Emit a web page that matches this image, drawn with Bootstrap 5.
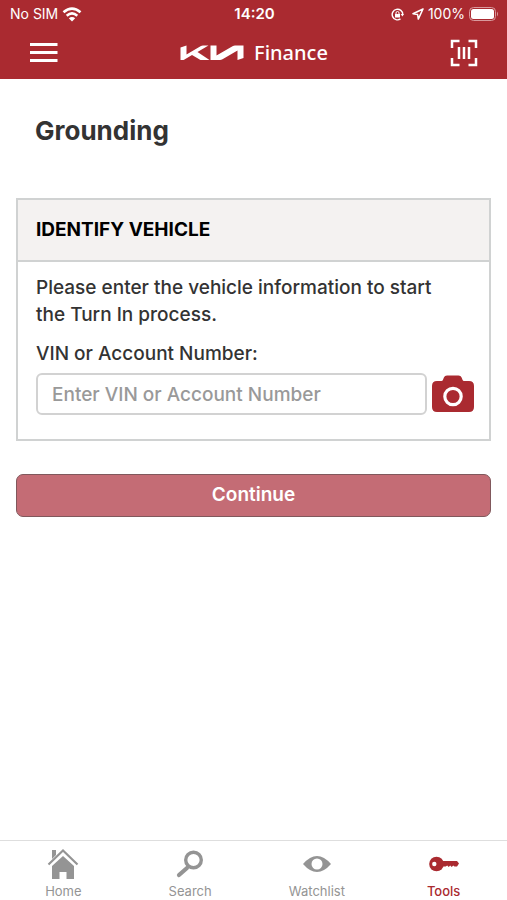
<!DOCTYPE html>
<html lang="en">
<head>
<meta charset="utf-8">
<meta name="viewport" content="width=device-width, initial-scale=1">
<title>Kia Finance - Grounding</title>
<link href="https://cdn.jsdelivr.net/npm/bootstrap@5.3.0/dist/css/bootstrap.min.css" rel="stylesheet">
<style>
  :root { --kia-red: #aa2a30; --ink: #333; --line: #d0d2d2; }
  body { font-family: Inter, "Open Sans", sans-serif; color: var(--ink); font-weight: 500; }
  svg { display: block; flex: none; }
  .app-header { background: var(--kia-red); }
  .status-bar { height: 28px; font-size: 14px; font-weight: 400; line-height: 20px; padding: 0 8px 0 10px; }
  .status-time { font-size: 15px; font-weight: 600; }
  .app-nav { height: 51px; padding: 0 28px 2px; }
  .brand { font: 600 20px/28px "Noto Sans", "Open Sans", sans-serif; color: #fff; text-decoration: none; gap: 10px; }
  .brand span { font-weight: 500; }
  .icon-btn { border: 0; background: none; padding: 0; color: inherit; }
  .page-title { font-size: 26px; line-height: 32px; font-weight: 700; padding: 36px 35px 51px; margin: 0; }
  .vehicle-card { border: 2px solid var(--line); border-radius: 0; color: var(--ink); }
  .vehicle-card .card-header { background: #f4f2f1; border-bottom: 2px solid var(--line); border-radius: 0; padding: 16px 18px; }
  .vehicle-card h2 { font-size: 19px; line-height: 28px; font-weight: 700; color: #000; margin: 0; }
  .vehicle-card .card-body { padding: 12px 14px 24px 18px; font-size: 19px; line-height: 27px; }
  .vin-label { margin-bottom: 6px; }
  .vin-input { height: 42px; border: 2px solid #d2d2d2; border-radius: 6px; padding: 0 14px; font-size: 19px; font-weight: 500; }
  .vin-input::placeholder { color: #999; opacity: 1; }
  .continue-btn { height: 43px; padding: 0; margin-top: 33px; font-size: 19px; font-weight: 600; border-radius: 7px;
    --bs-btn-color: #fff; --bs-btn-bg: #c46c75; --bs-btn-border-color: #80585c;
    --bs-btn-hover-color: #fff; --bs-btn-hover-bg: #b95c66; --bs-btn-hover-border-color: #80585c; }
  .tab-bar { border-top: 1px solid #dedede; height: 60px; }
  .tab-bar .nav-link { color: #949494; padding: 5px 0 0; font-size: 13px; line-height: 18px; font-weight: 400; }
  .tab-bar .nav-link.active { color: var(--kia-red); font-weight: 500; }
  .tab-icon { height: 36px; }
</style>
</head>
<body class="d-flex flex-column min-vh-100 bg-white">
<header class="app-header text-white">
  <div class="status-bar row g-0 align-items-center">
    <div class="col d-flex align-items-center gap-1">
      <span>No SIM</span>
      <svg width="20" height="15" viewBox="0 0 20 15" fill="none" stroke="#fff" stroke-width="2.6" aria-hidden="true"><path d="M1.500 5.300Q10-2 18.500 5.300M4.700 8.700Q10 4.200 15.300 8.700"/><path d="M10 14.500 6.800 11.300Q10 8.800 13.200 11.300Z" fill="#fff" stroke="none"/></svg>
    </div>
    <div class="col-auto status-time">14:20</div>
    <div class="col d-flex align-items-center justify-content-end">
      <svg class="me-2" width="13" height="13" viewBox="0 0 13 13" fill="none" stroke="#fff" stroke-width="1.400" aria-hidden="true"><path d="M9.500 10.900A5.300 5.300 0 1 1 11.800 6.500"/><path d="M9.700 6h3.300l-1.600 2.500z" fill="#fff" stroke="none"/><rect x="4" y="6" width="5" height="3.500" fill="#fff" stroke="none"/><path d="M5 6V5a1.500 1.500 0 0 1 3 0v1" stroke-width="1"/></svg>
      <svg class="me-1" width="12" height="12" viewBox="0 0 12 12" fill="none" stroke="#fff" stroke-width="1.500" stroke-linejoin="round" aria-hidden="true"><path d="M11 1 1 5.800l4.600.7.700 4.600z"/></svg>
      <span>100%</span>
      <svg class="ms-1" width="30" height="14" viewBox="0 0 30 14" aria-hidden="true"><rect x=".5" y=".5" width="26" height="13" rx="4" fill="none" stroke="#d99a9d"/><rect x="2" y="2" width="23" height="10" rx="2.500" fill="#fff"/><path d="M28 4.500q2 2.500 0 5z" fill="#d99a9d"/></svg>
    </div>
  </div>
  <nav class="app-nav d-flex align-items-center justify-content-between" aria-label="Main">
    <button class="icon-btn" type="button" aria-label="Menu">
      <svg width="31" height="28" viewBox="0 0 31 28" fill="none" stroke="#fff" stroke-width="3"><path d="M2 5.500h27.500M2 13.500h27.500M2 21.500h27.500"/></svg>
    </button>
    <a class="brand d-flex align-items-center" href="#" aria-label="Kia Finance">
      <svg width="64" height="16" viewBox="0 0 64 16" fill="#fff" aria-hidden="true"><path d="M.5 2.500 6.500.500V9.500L20.500 1.200Q21.700.5 23 .5H28.500L17.500 7 29.500 15H20.500L12 10 4.500 14.500Q3.600 15 2.500 15H.5Z"/><path d="M30.500.5H36.500V10.500L52.500 1.200Q53.700.5 55 .5H63.500V13L57.500 15V5.500L42.500 14.300Q41.300 15 40 15H30.500Z"/></svg>
      <span>Finance</span>
    </a>
    <button class="icon-btn" type="button" aria-label="Scan barcode">
      <svg width="30" height="30" viewBox="0 0 30 30" fill="none" stroke="#fff" stroke-width="2.500"><path d="M3 10V3h7.500M19.500 3h7.500v7M27 20v7h-7.500M10.500 27H3v-7"/><path d="M10 9v12M15 9v12M20 9v12"/></svg>
    </button>
  </nav>
</header>

<main class="flex-grow-1">
  <h1 class="page-title">Grounding</h1>
  <form class="px-3">
    <section class="card vehicle-card">
      <div class="card-header"><h2>IDENTIFY VEHICLE</h2></div>
      <div class="card-body">
        <p class="mb-2 pe-4">Please enter the vehicle information to start the Turn In process.</p>
        <label class="vin-label d-block pt-1" for="vin">VIN or Account Number:</label>
        <div class="d-flex align-items-center gap-1">
          <input class="form-control vin-input flex-grow-1" id="vin" type="text" placeholder="Enter VIN or Account Number">
          <button class="icon-btn" type="button" aria-label="Scan VIN with camera">
            <svg width="44" height="38" viewBox="0 0 44 38"><path d="M6 6h4.500q1 0 1.400-1l1-2.500Q13.600.5 16 .5h11.500q2.300 0 3.100 2l1 2.500q.4 1 1.400 1H38q5 0 5 5v21q0 5-5 5H6q-5 0-5-5V11q0-5 5-5z" fill="#aa2a30"/><circle cx="22" cy="21.500" r="8.200" fill="none" stroke="#fff" stroke-width="3.200"/></svg>
          </button>
        </div>
      </div>
    </section>
    <button class="btn continue-btn w-100" type="submit">Continue</button>
  </form>
</main>

<nav class="tab-bar bg-white" aria-label="Sections">
  <div class="nav nav-fill row row-cols-4 g-0">
    <a class="nav-link col d-flex flex-column align-items-center" href="#">
      <span class="tab-icon d-flex align-items-center"><svg width="32" height="32" viewBox="0 0 32 32" fill="#949494"><path d="M5 2h4v5L5 11zM16 8l11 10v13h-7.500v-7h-7v7H5V18z"/><path d="M1.500 16.500 16 2.500l14.500 14" fill="none" stroke="#949494" stroke-width="2.200"/></svg></span>Home
    </a>
    <a class="nav-link col d-flex flex-column align-items-center" href="#">
      <span class="tab-icon d-flex align-items-center"><svg width="28" height="28" viewBox="0 0 28 28" fill="none" stroke="#949494"><circle cx="17.500" cy="10" r="7.800" stroke-width="3.400"/><path d="m11 18-8 7" stroke-width="4.200" stroke-linecap="round"/></svg></span>Search
    </a>
    <a class="nav-link col d-flex flex-column align-items-center" href="#">
      <span class="tab-icon d-flex align-items-center"><svg width="28" height="18" viewBox="0 0 28 18"><path d="M0 9Q7 1 14 1t14 8q-7 8-14 8T0 9z" fill="#949494"/><circle cx="14" cy="9" r="5.500" fill="#fff"/></svg></span>Watchlist
    </a>
    <a class="nav-link active col d-flex flex-column align-items-center" href="#" aria-current="page">
      <span class="tab-icon d-flex align-items-center"><svg width="30" height="16" viewBox="0 0 30 16"><circle cx="7.500" cy="8" r="7.300" fill="#aa2a30"/><circle cx="5.300" cy="8" r="2.200" fill="#fff"/><path d="M13 5h15l2 2.500-2 3h-2.500l-1.300-1-1.500 1.500-1.500-1.500-1.500 1.500-1.500-1.500-1.500 1H13z" fill="#aa2a30"/></svg></span>Tools
    </a>
  </div>
</nav>
<script src="https://cdn.jsdelivr.net/npm/bootstrap@5.3.0/dist/js/bootstrap.bundle.min.js"></script>
</body>
</html>
